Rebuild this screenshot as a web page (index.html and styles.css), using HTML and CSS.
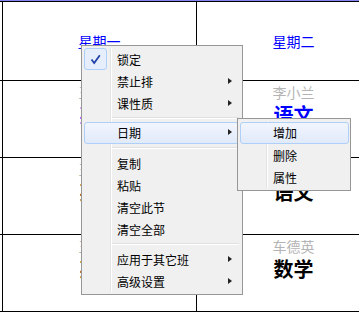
FILE: index.html
```html
<!DOCTYPE html>
<html lang="zh-CN">
<head>
    <meta charset="UTF-8">
    <meta name="viewport" content="width=device-width, initial-scale=1.0">
    <title>课表</title>
    <link rel="stylesheet" href="styles.css">
</head>
<body>
    <div class="sheet">
        <div class="row head">
            <div class="cell"><a class="day hover">星期一</a></div>
            <div class="cell"><a class="day">星期二</a></div>
        </div>
        <div class="row">
            <div class="cell">
                <span class="teacher">王晓燕</span>
                <span class="subject blue">英语</span>
            </div>
            <div class="cell">
                <span class="teacher">李小兰</span>
                <span class="subject blue">语文</span>
            </div>
        </div>
        <div class="row">
            <div class="cell">
                <span class="teacher">王晓燕</span>
                <span class="subject">英语</span>
            </div>
            <div class="cell">
                <span class="teacher">李小兰</span>
                <span class="subject">语文</span>
            </div>
        </div>
        <div class="row">
            <div class="cell">
                <span class="teacher">王晓燕</span>
                <span class="subject">英语</span>
            </div>
            <div class="cell">
                <span class="teacher">车德英</span>
                <span class="subject">数学</span>
            </div>
        </div>
        <div class="row"></div>
    </div>

    <!-- 右键菜单 -->
    <div class="menu main-menu">
        <div class="item checked">
            <span class="check">
                <svg width="11" height="11" viewBox="0 0 11 11"><path d="M1.5 5.5 L4.2 9 L9.8 1.2" fill="none" stroke="#2340a8" stroke-width="1.8"/></svg>
            </span>
            锁定
        </div>
        <div class="item sub">禁止排</div>
        <div class="item sub">课性质</div>
        <div class="sep"></div>
        <div class="item sub active">日期</div>
        <div class="sep"></div>
        <div class="item">复制</div>
        <div class="item">粘贴</div>
        <div class="item">清空此节</div>
        <div class="item">清空全部</div>
        <div class="sep"></div>
        <div class="item sub">应用于其它班</div>
        <div class="item sub">高级设置</div>
    </div>

    <div class="menu sub-menu">
        <div class="item active">增加</div>
        <div class="item">删除</div>
        <div class="item">属性</div>
    </div>
</body>
</html>
```

FILE: styles.css
```css
body {
    margin: 0;
    overflow: hidden;
    background: #fff;
    font-family: "Noto Sans CJK SC", "Noto Sans", sans-serif;
}

/* 课表 */
.sheet {
    border-top: 1px solid #8484f2;
    height: 315px;
    overflow: hidden;
}

.row {
    display: flex;
    padding-left: 2px;
    border-bottom: 1px solid #000;
    height: 76px;
}

.row.head {
    border-top: 1px solid #000;
    height: 78px;
}

.cell {
    width: 194px;
    flex-shrink: 0;
    border-left: 1px solid #000;
    display: flex;
    flex-direction: column;
    align-items: center;
    padding-top: 4px;
    box-sizing: border-box;
}

.head .cell {
    justify-content: center;
    padding-top: 0;
}

.day {
    color: #0000ff;
    font-size: 14px;
    line-height: 16px;
    cursor: pointer;
}

.day.hover {
    text-decoration: underline;
}

.teacher {
    color: #b4b4b4;
    font-size: 14px;
    line-height: 15px;
}

.subject {
    margin-top: 4px;
    font-size: 20px;
    line-height: 21px;
    font-weight: bold;
    color: #000;
}

.subject.blue {
    color: #0000ff;
}

/* 菜单 */
.menu {
    position: absolute;
    box-sizing: border-box;
    background: #f0f0f0;
    border: 1px solid #979797;
    font-size: 12px;
    color: #000;
}

.menu::before {
    content: "";
    position: absolute;
    left: 28px;
    top: 2px;
    bottom: 2px;
    width: 1px;
    background: #e2e3e3;
    box-shadow: 1px 0 0 #fff;
}

.main-menu {
    left: 81px;
    top: 45px;
    width: 162px;
    padding: 2px 3px 2px 2px;
}

.sub-menu {
    left: 237px;
    top: 118px;
    width: 114px;
    padding: 3px 1px 2px 2px;
}

.item {
    position: relative;
    height: 22px;
    line-height: 22px;
    padding-left: 32px;
    box-sizing: border-box;
    border: 1px solid transparent;
    border-radius: 3px;
}

.item.active {
    background: linear-gradient(#f1f5fd, #e1eafa);
    border-color: #aecff7;
    line-height: 20px;
}

.item.sub::after {
    content: "";
    position: absolute;
    right: 6px;
    top: 7px;
    border-left: 4px solid #222;
    border-top: 3.5px solid transparent;
    border-bottom: 3.5px solid transparent;
}

.item.active.sub::after {
    top: 6px;
}

.check {
    position: absolute;
    left: -1px;
    top: -1px;
    width: 23px;
    height: 22px;
    box-sizing: border-box;
    border: 1px solid #aecff7;
    border-radius: 3px;
    background: #e6eefc;
    display: flex;
    align-items: center;
    justify-content: center;
}

.sep {
    height: 8px;
    margin-left: 28px;
    position: relative;
}

.sep::after {
    content: "";
    position: absolute;
    left: 0;
    right: 0;
    top: 3px;
    height: 1px;
    background: #e0e0e0;
    box-shadow: 0 1px 0 #fff;
}
```
